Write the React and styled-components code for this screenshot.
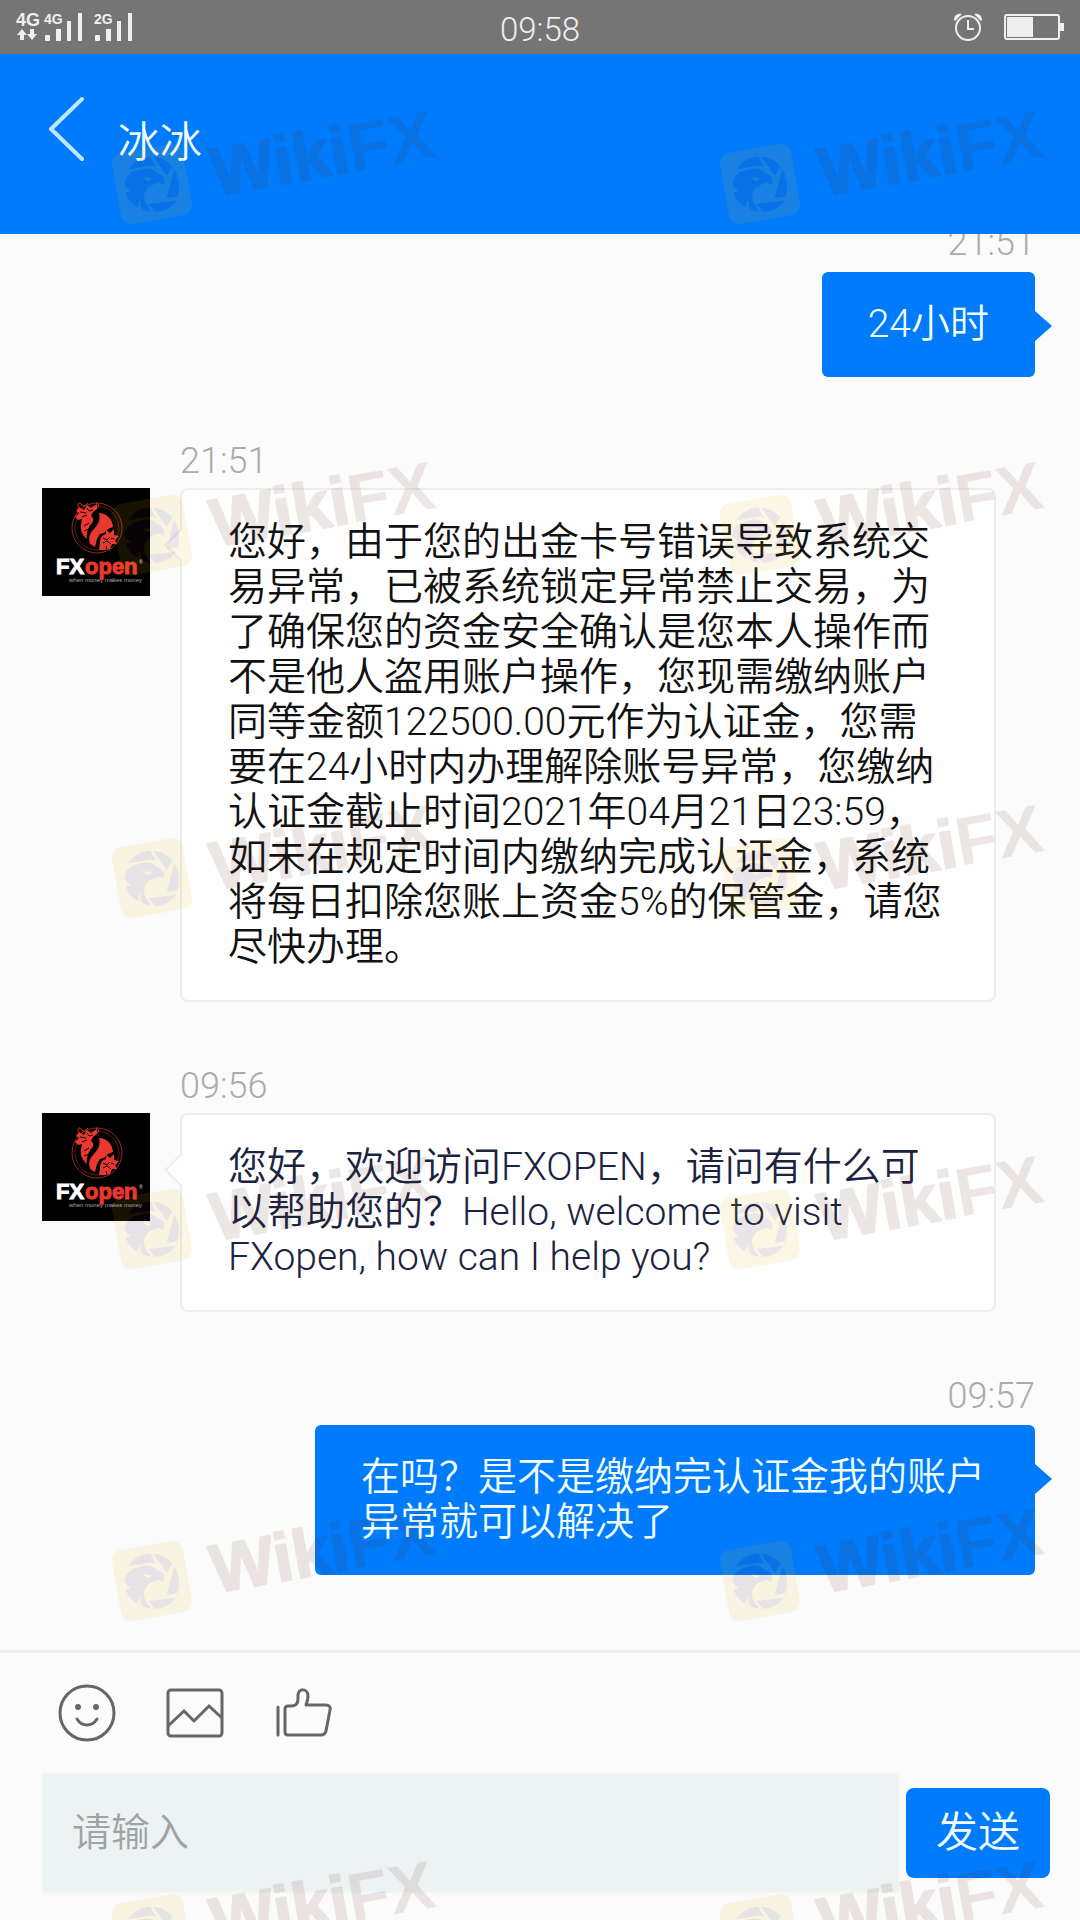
import React from 'react';
import styled, { createGlobalStyle } from 'styled-components';

const GlobalStyle = createGlobalStyle`
    * {
        box-sizing: border-box;
    }
    body {
        margin: 0;
        background: #fbfbfb;
        font-family: Roboto, "Noto Sans CJK SC", sans-serif;
        font-weight: 350;
    }
`;

const Page = styled.div`
    position: relative;
    display: flex;
    flex-direction: column;
    height: 100vh;
    overflow: hidden;
    background: #fbfbfb;
`;

const StatusBar = styled.div`
    display: grid;
    grid-template-columns: 1fr auto 1fr;
    align-items: center;
    height: 54px;
    padding: 0 14px;
    background: #757575;
    color: #efefef;
    flex: none;
`;

const Clock = styled.time`
    padding-top: 6px;
    font-size: 33px;
    line-height: 48px;
`;

const StatusIcons = styled.div`
    display: flex;
    justify-content: flex-end;
    gap: 21px;
`;

const Header = styled.header`
    display: flex;
    align-items: flex-start;
    gap: 34px;
    height: 180px;
    padding: 42px 48px;
    background: #007bfb;
    flex: none;
`;

const BackButton = styled.button`
    display: block;
    padding: 0;
    border: 0;
    background: none;
    line-height: 0;
`;

const Title = styled.h1`
    margin: 17px 0 0;
    color: #f2ffff;
    font-size: 42px;
    font-weight: 350;
    line-height: 60px;
`;

const Chat = styled.main`
    display: flex;
    flex: 1;
    flex-direction: column;
    justify-content: flex-end;
    gap: 58px;
    min-height: 0;
    padding: 0 45px 75px 42px;
    overflow: hidden;
`;

const Sent = styled.article`
    display: flex;
    flex-direction: column;
    align-items: flex-end;
    gap: 3px;
    flex: none;
`;

const Received = styled.article`
    display: grid;
    grid-template-columns: 108px minmax(0, 816px);
    column-gap: 30px;
    row-gap: 1px;
    flex: none;
`;

const Time = styled.time`
    grid-column: 2;
    color: #ababab;
    font-size: 36px;
    line-height: 52px;
`;

const Bubble = styled.p`
    position: relative;
    margin: 0;
    padding: 30px 46px;
    border-radius: 6px;
    font-size: 39px;
    line-height: 45px;
`;

const SentBubble = styled(Bubble)`
    max-width: 720px;
    background: #007bfb;
    color: #f2ffff;

    &::after {
        content: '';
        position: absolute;
        top: 39px;
        left: 100%;
        border: 15px solid transparent;
        border-right: 0;
        border-left: 17px solid #007bfb;
    }
`;

const ReceivedBubble = styled(Bubble)`
    border: 2px solid #ededed;
    border-radius: 8px;
    background: #fefefe;
    color: ${props => props.$color};

    &::before {
        content: '';
        position: absolute;
        top: 43px;
        left: -13px;
        width: 22px;
        height: 22px;
        border: solid #ededed;
        border-width: 0 0 2px 2px;
        background: #fefefe;
        transform: rotate(45deg);
    }
`;

const Footer = styled.footer`
    padding: 30px 30px 27px 42px;
    border-top: 3px solid #eeeeee;
    flex: none;
`;

const Tools = styled.div`
    display: flex;
    gap: 48px;
    padding: 0 15px 30px;
`;

const ToolButton = styled.button`
    width: 60px;
    height: 60px;
    padding: 0;
    border: 0;
    background: none;
    line-height: 0;
`;

const Form = styled.form`
    display: flex;
    align-items: center;
    gap: 6px;
`;

const TextBox = styled.input`
    flex: 1;
    min-width: 0;
    height: 120px;
    padding: 0 28px;
    border: 2px solid #f3f4f5;
    border-radius: 0;
    background: #edf3f3;
    color: #222;
    font-family: inherit;
    font-size: 39px;
    font-weight: 350;

    &::placeholder {
        color: #9fa3a3;
        opacity: 1;
    }
`;

const SendButton = styled.button`
    width: 144px;
    height: 90px;
    padding: 0;
    border: 0;
    border-radius: 8px;
    background: #007bfb;
    color: #f2ffff;
    font-family: inherit;
    font-size: 42px;
    font-weight: 350;
    line-height: 60px;
`;

const Overlay = styled.svg`
    position: absolute;
    inset: 0;
    width: 100%;
    height: 100%;
    pointer-events: none;
`;

function Bars({ x }) {
    return (
        <g transform={`translate(${x} 0)`}>
            <rect x="0" y="35" width="5" height="6" rx="1" />
            <rect x="11" y="29" width="5" height="12" />
            <rect x="22" y="21" width="4" height="20" />
            <rect x="33" y="13" width="4" height="28" />
        </g>
    );
}

function Signal() {
    return (
        <svg width="124" height="54" viewBox="14 0 124 54" fill="#efefef" fontFamily="Liberation Sans, sans-serif" fontWeight="bold">
            <text x="16" y="26" fontSize="18">4G</text>
            <text x="44" y="24" fontSize="14">4G</text>
            <text x="94" y="24" fontSize="14">2G</text>
            <path d="M22 29l5 6h-3v5h-4v-5h-3zM32 40l5-6h-3v-5h-4v5h-3z" />
            <Bars x={45} />
            <Bars x={95} />
        </svg>
    );
}

function Alarm() {
    return (
        <svg width="30" height="30" viewBox="0 0 30 30" fill="none" stroke="#efefef" strokeWidth="2">
            <circle cx="15" cy="16" r="12" />
            <path d="M15 8v9h6" />
            <path d="M1 8C1 3 5 1 9 2L2 9zM29 8C29 3 25 1 21 2L28 9z" fill="#efefef" stroke="none" />
        </svg>
    );
}

function Battery() {
    return (
        <svg width="62" height="30" viewBox="0 0 62 30">
            <rect x="1" y="3" width="54" height="24" rx="2" fill="none" stroke="#efefef" strokeWidth="2" />
            <path d="M3 5h26v20H3zM56 11h4v8h-4z" fill="#efefef" />
        </svg>
    );
}

function Avatar() {
    return (
        <svg width="108" height="108" viewBox="0 0 108 108" role="img" aria-label="FXopen">
            <rect width="108" height="108" fill="#000" />
            <circle cx="55" cy="40" r="25" fill="none" stroke="#8e2c27" strokeWidth="1" />
            <circle cx="55" cy="40" r="22" fill="none" stroke="#5d1815" strokeWidth="1" />
            <g fill="#e8382f">
                <path d="M37 19l5 3 3-5 4 3 6-4 0 5-4 3-2 4c3 2 3 5 0 8-3 4-5 9-4 15-5-4-7-9-6-15l1-5-4 1-3-3 4-4-3-2z" />
                <path d="M57 25c8 0 14 7 14 14l-5 2-4 4-4 1-3 5-2 8-5-3c-2-7 0-11 4-15 4-5 7-9 5-16z" />
                <path d="M58 55c0-5 2-8 6-9l0-4 4 3 4-4 0 6 5 1-4 4 2 4-5 0-2 5-5 1-6 0z" />
            </g>
            <g fill="none" stroke="#120202" strokeWidth="1">
                <path d="M38 24l6 1M40 29l5-2M45 20l2 3 4-1M61 50l4 2 3-3M61 55l4-2 4 3M64 58l1 3M69 50l3 1" />
                <path d="M42 38l5-3M42 43l5-2" />
            </g>
            <path d="M37 19c-3-4 1-5 2-3 1 3 5 2 7-1M53 20c5 1 4-5 1-5" fill="none" stroke="#e8382f" strokeWidth="1" />
            <g fontFamily="Liberation Sans, sans-serif" fontWeight="bold">
                <text x="14" y="86" fontSize="22" fill="#fff" stroke="#fff">FX</text>
                <text x="43" y="86" fontSize="22" fill="#e8382f" stroke="#e8382f">open</text>
                <text x="27" y="94" fontSize="6" fontWeight="normal" fill="#aaa">when money makes money</text>
                <text x="97" y="76" fontSize="5" fill="#bbb">®</text>
            </g>
        </svg>
    );
}

const markColumns = [152, 760];
const markRows = [184, 535, 878, 1229, 1581, 1934];

function Mark({ x, y }) {
    return (
        <g transform={`translate(${x} ${y})`}>
            <g mask="url(#eagle-cut)">
                <rect x="-36" y="-36" width="72" height="72" rx="10" transform="rotate(-10)" fill="#ebbe00" opacity="0.1" />
            </g>
            <use href="#eagle" fill="#46284b" opacity="0.11" />
            <g fill="#5a1e14" opacity="0.1">
                <text
                    transform="translate(63 12) rotate(-10)"
                    fontFamily="Liberation Sans, sans-serif"
                    fontSize="68"
                    fontWeight="bold"
                >
                    <tspan stroke="#5a1e14" strokeWidth="2" strokeLinejoin="round">Wiki</tspan>
                    <tspan>FX</tspan>
                </text>
            </g>
        </g>
    );
}

function Watermark() {
    return (
        <Overlay aria-hidden="true">
            <defs>
                <g id="eagle" transform="scale(0.333)">
                    <path d="M-71-44C-55-70-30-82-5-82L12-52Q-4-58-32-50Z" />
                    <path d="M4-82C30-80 50-68 62-52L44-24Z" />
                    <path d="M67-44C84-15 84 15 76 37L44 42Z" />
                    <path d="M-10 60L72 50C55 75 30 83 8 83Z" />
                    <path fillRule="evenodd" d="M-83-2C-78-26-62-38-44-40C-26-50 4-50 14-32C32-30 40-16 35 4C28-6 12-4 2 3C-18 10-28 32-22 52C-18 64-8 76-2 83C-14 82-22 79-28 75C-34 66-36 56-35 46C-42 54-43 62-40 70C-62 60-74 44-79 24C-74 26-68 24-62 18C-72 18-80 10-83-2ZM-26-20L-2-18L-8-9Q-20-10-26-20Z" />
                </g>
                <mask id="eagle-cut" maskUnits="userSpaceOnUse" x="-50" y="-50" width="100" height="100">
                    <rect x="-50" y="-50" width="100" height="100" fill="#fff" />
                    <use href="#eagle" fill="#000" />
                </mask>
            </defs>
            {markRows.map(y => markColumns.map(x => <Mark key={`${x}-${y}`} x={x} y={y} />))}
        </Overlay>
    );
}

function SentMessage({ time, children }) {
    return (
        <Sent>
            <Time>{time}</Time>
            <SentBubble>{children}</SentBubble>
        </Sent>
    );
}

function ReceivedMessage({ time, color, children }) {
    return (
        <Received>
            <Time>{time}</Time>
            <Avatar />
            <ReceivedBubble $color={color}>{children}</ReceivedBubble>
        </Received>
    );
}

function App() {
    return (
        <Page lang="zh-CN">
            <GlobalStyle />
            <StatusBar>
                <Signal />
                <Clock>09:58</Clock>
                <StatusIcons>
                    <Alarm />
                    <Battery />
                </StatusIcons>
            </StatusBar>
            <Header>
                <BackButton type="button" aria-label="返回">
                    <svg width="36" height="66" viewBox="0 0 36 66" fill="none" stroke="#bfe6ff" strokeWidth="4" strokeLinecap="round" strokeLinejoin="round">
                        <path d="M34 3L3 33l31 30" />
                    </svg>
                </BackButton>
                <Title>冰冰</Title>
            </Header>
            <Chat>
                <SentMessage time="21:51">24小时</SentMessage>
                <ReceivedMessage time="21:51" color="#111111">
                    您好，由于您的出金卡号错误导致系统交易异常，已被系统锁定异常禁止交易，为了确保您的资金安全确认是您本人操作而不是他人盗用账户操作，您现需缴纳账户同等金额122500.00元作为认证金，您需要在24小时内办理解除账号异常，您缴纳认证金截止时间2021年04月21日23:59，如未在规定时间内缴纳完成认证金，系统将每日扣除您账上资金5%的保管金，请您尽快办理。
                </ReceivedMessage>
                <ReceivedMessage time="09:56" color="#1b2341">
                    您好，欢迎访问FXOPEN，请问有什么可以帮助您的？Hello, welcome to visit FXopen, how can I help you?
                </ReceivedMessage>
                <SentMessage time="09:57">在吗？是不是缴纳完认证金我的账户异常就可以解决了</SentMessage>
            </Chat>
            <Footer>
                <Tools>
                    <ToolButton type="button" aria-label="表情">
                        <svg width="60" height="60" viewBox="0 0 60 60" fill="none" stroke="#666" strokeWidth="3" strokeLinecap="round">
                            <circle cx="30" cy="30" r="27" />
                            <path d="M20 36c5 8 15 8 20 0" />
                            <circle cx="21" cy="24" r="3" fill="#666" stroke="none" />
                            <circle cx="39" cy="24" r="3" fill="#666" stroke="none" />
                        </svg>
                    </ToolButton>
                    <ToolButton type="button" aria-label="图片">
                        <svg width="60" height="60" viewBox="0 0 60 60" fill="none" stroke="#666" strokeWidth="3">
                            <rect x="3" y="7" width="54" height="46" rx="3" />
                            <path d="M3 43l16-15 10 10 15-15 13 12" />
                        </svg>
                    </ToolButton>
                    <ToolButton type="button" aria-label="点赞">
                        <svg width="60" height="60" viewBox="0 0 60 60" fill="none" stroke="#666" strokeWidth="3" strokeLinecap="round" strokeLinejoin="round">
                            <path d="M5 24v28" />
                            <path d="M15 23h3c5 0 7-3 7-7v-4c0-7 10-7 10 1 0 4-1 6-2 9h20c3 0 5 2 4 5l-4 21c-1 3-2 4-5 4H15c-2 0-3-1-3-3V26c0-2 1-3 3-3z" />
                        </svg>
                    </ToolButton>
                </Tools>
                <Form>
                    <TextBox type="text" aria-label="请输入" placeholder="请输入" />
                    <SendButton type="button">发送</SendButton>
                </Form>
            </Footer>
            <Watermark />
        </Page>
    );
}

export default App;
